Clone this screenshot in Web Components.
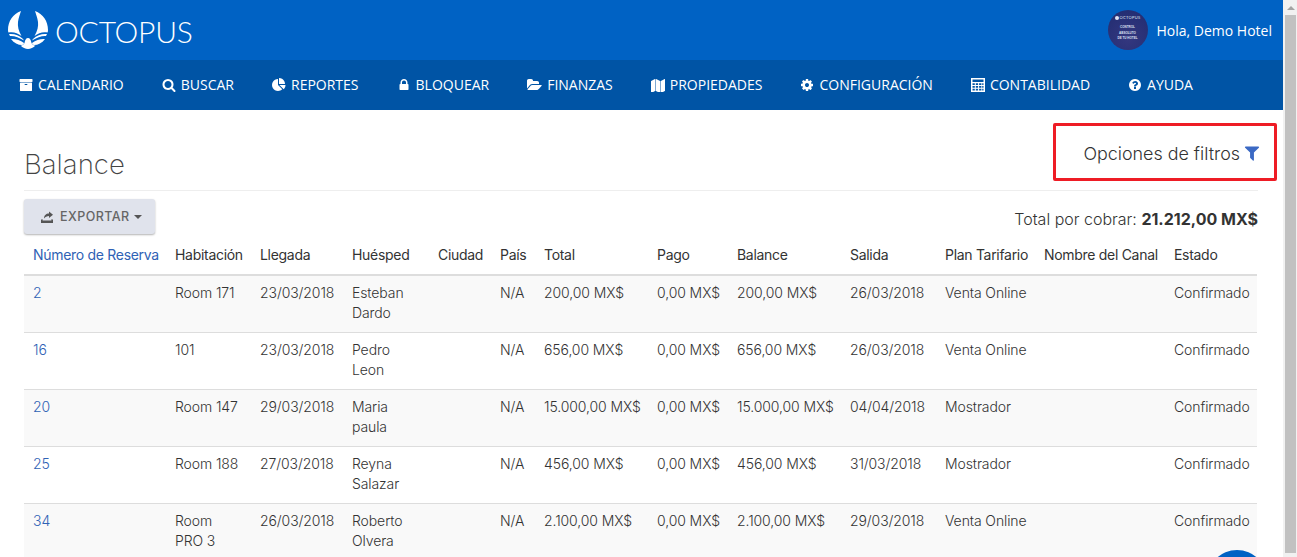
<!DOCTYPE html>
<html lang="es">
<head>
<meta charset="utf-8">
<title>Balance</title>
<style>
  html, body { margin: 0; height: 100%; overflow: hidden; background: #fff; }
  body { display: flex; font-family: "Open Sans", sans-serif; }
</style>
</head>
<body>
<app-shell>
  <app-header></app-header>
  <app-nav></app-nav>
  <balance-page></balance-page>
  <chat-bubble></chat-bubble>
</app-shell>
<page-scrollbar></page-scrollbar>

<script>
const ICONS = {
  archive: ['0 0 1792 1792', 'M1088 832q0-26-19-45t-45-19h-256q-26 0-45 19t-19 45 19 45 45 19h256q26 0 45-19t19-45zm576-192v960q0 26-19 45t-45 19h-1408q-26 0-45-19t-19-45v-960q0-26 19-45t45-19h1408q26 0 45 19t19 45zm64-448v256q0 26-19 45t-45 19h-1536q-26 0-45-19t-19-45v-256q0-26 19-45t45-19h1536q26 0 45 19t19 45z'],
  search: ['0 0 1792 1792', 'M1216 832q0-185-131.500-316.500t-316.500-131.500-316.500 131.500-131.500 316.500 131.500 316.500 316.500 131.500 316.500-131.500 131.500-316.500zm512 832q0 52-38 90t-90 38q-54 0-90-38l-343-342q-179 124-399 124-143 0-273.500-55.500t-225-150-150-225-55.500-273.500 55.500-273.500 150-225 225-150 273.500-55.500 273.500 55.500 225 150 150 225 55.500 273.500q0 220-124 399l343 343q37 37 37 90z'],
  pie: ['0 0 1792 1792', 'M768 890l546 546q-106 108-247.500 168t-298.500 60q-209 0-385.500-103t-279.500-279.500-103-385.500 103-385.500 279.500-279.500 385.500-103v762zm187 6h773q0 157-60 298.500t-168 247.500zm709-128h-768v-768q209 0 385.500 103t279.500 279.500 103 385.500z'],
  lock: ['0 0 1792 1792', 'M640 768h512v-192q0-106-75-181t-181-75-181 75-75 181v192zm832 96v576q0 40-28 68t-68 28h-960q-40 0-68-28t-28-68v-576q0-40 28-68t68-28h32v-192q0-184 132-316t316-132 316 132 132 316v192h32q40 0 68 28t28 68z'],
  folder: ['0 0 1920 1792', 'M1879 952q0 31-31 66l-336 396q-43 51-120.500 86.500t-143.500 35.500h-1088q-34 0-60.500-13t-26.500-43q0-31 31-66l336-396q43-51 120.500-86.500t143.500-35.500h1088q34 0 60.500 13t26.500 43zm-343-344v160h-832q-94 0-197 47.500t-164 119.500l-337 396-5 6q0-4-.5-12.500t-.5-12.500v-960q0-92 66-158t158-66h320q92 0 158 66t66 158v32h544q92 0 158 66t66 158z'],
  map: ['0 0 1792 1792', 'M512 128q13 0 22.500 9.500t9.500 22.500v1472q0 20-17 28l-480 256q-7 4-15 4-13 0-22.500-9.500t-9.500-22.500v-1472q0-20 17-28l480-256q7-4 15-4zm1248 0q13 0 22.500 9.500t9.500 22.500v1472q0 20-17 28l-480 256q-7 4-15 4-13 0-22.500-9.500t-9.500-22.500v-1472q0-20 17-28l480-256q7-4 15-4zm-1120 0q8 0 14 3l512 256q18 10 18 29v1472q0 13-9.500 22.500t-22.500 9.500q-8 0-14-3l-512-256q-18-10-18-29v-1472q0-13 9.500-22.500t22.500-9.500z'],
  cog: ['0 0 1792 1792', 'M1152 896q0-106-75-181t-181-75-181 75-75 181 75 181 181 75 181-75 75-181zm512-109v222q0 12-8 23t-20 13l-185 28q-19 54-39 91 35 50 107 138 10 12 10 25t-9 23q-27 37-99 108t-94 71q-12 0-26-9l-138-108q-44 23-91 38-16 136-29 186-7 28-36 28h-222q-14 0-24.500-8.500t-11.500-21.500l-28-184q-49-16-90-37l-141 107q-10 9-25 9-14 0-25-11-126-114-165-168-7-10-7-23 0-12 8-23 15-21 51-66.500t54-70.500q-27-50-41-99l-183-27q-13-2-21-12.500t-8-23.500v-222q0-12 8-23t19-13l186-28q14-46 39-92-40-57-107-138-10-12-10-24 0-10 9-23 26-36 98.500-107.500t94.500-71.500q13 0 26 10l138 107q44-23 91-38 16-136 29-186 7-28 36-28h222q14 0 24.500 8.500t11.500 21.500l28 184q49 16 90 37l142-107q9-9 24-9 13 0 25 10 129 119 165 170 7 8 7 22 0 12-8 23-15 21-51 66.500t-54 70.500q26 50 41 98l183 28q13 2 21 12.500t8 23.500z'],
  calc: ['0 0 14 14', 'M0 0h14v14H0zM1.500 1.500v2.500h11V1.500zM1.500 5.200v1.800h2.300V5.200zM4.800 5.200v1.800h2.300V5.200zM8.100 5.200v1.800h2.300V5.200zM11.200 5.200v1.800h1.300V5.200zM1.500 8v1.800h2.300V8zM4.800 8v1.800h2.300V8zM8.100 8v1.800h2.300V8zM11.200 8v1.800h1.300V8zM1.500 10.800v1.800h2.300v-1.800zM4.800 10.800v1.800h2.300v-1.800zM8.100 10.800v1.800h2.300v-1.800zM11.200 10.800v1.800h1.300v-1.800z'],
  help: ['0 0 1792 1792', 'M1024 1376v-192q0-14-9-23t-23-9h-192q-14 0-23 9t-9 23v192q0 14 9 23t23 9h192q14 0 23-9t9-23zm256-672q0-88-55.500-163t-138.500-116-170-41q-243 0-371 213-15 24 8 42l132 100q7 6 19 6 16 0 25-12 53-68 86-92 34-24 86-24 48 0 85.500 26t37.500 59q0 38-20 61t-68 45q-63 28-115.500 86.500t-52.500 125.500v36q0 14 9 23t23 9h192q14 0 23-9t9-23q0-19 21.500-49.500t54.500-49.500q32-18 49-28.500t46-35 44.500-48 28-60.500 12.500-81zm384 192q0 209-103 385.500t-279.500 279.500-385.500 103-385.500-103-279.500-279.500-103-385.500 103-385.500 279.500-279.500 385.500-103 385.500 103 279.500 279.500 103 385.500z'],
  filter: ['0 0 1792 1792', 'M1595 295q17 41-14 70l-493 493v742q0 42-39 59-13 5-25 5-27 0-45-19l-256-256q-19-19-19-45v-486l-493-493q-31-29-14-70 17-39 59-39h1280q42 0 59 39z']
}

const LOGO_HALF = `
  <path d="M13 0C5 3 0 10 0 19c0 1 .2 2 .5 2.500 4-1 9 0 13 3.500C10.500 20 9.500 15 10 11 10.500 7 12 3 13 0z"/>
  <path d="M1 23c5-.5 10 1 14 5l1 1.500c-5-3-10-5-14-4.500z"/>
  <path d="M3 28c4-.5 9 1 13 4 0 1-1 2-2 2-4 0-8-2-11-6z"/>
`

function icon(name, size) {
  const [box, d] = ICONS[name]
  return `<svg viewBox="${box}" height="${size}" fill="currentColor" fill-rule="evenodd" aria-hidden="true"><path d="${d}"/></svg>`
}

class AppShell extends HTMLElement {
  constructor() {
    super()
    this.attachShadow({ mode: 'open' }).innerHTML = `
      <style>
        :host { display: flex; flex-direction: column; flex: 1; min-width: 0; height: 100vh; overflow: hidden; position: relative; }
      </style>
      <slot></slot>
    `
  }
}

class AppHeader extends HTMLElement {
  constructor() {
    super()
    this.attachShadow({ mode: 'open' }).innerHTML = `
      <style>
        :host { display: flex; flex: none; align-items: center; justify-content: space-between; height: 60px; padding: 0 11px 0 8px; background: #0062c4; color: #fff; }
        .logo { display: flex; align-items: center; gap: 7px; }
        .word { font: 300 30px/1 "Lato", sans-serif; letter-spacing: -0.2px; padding-top: 1px; }
        .user { display: flex; align-items: center; gap: 9px; font: 14px "Open Sans", sans-serif; }
        .avatar {
          width: 40px; height: 40px; border-radius: 50%; background: radial-gradient(circle at 50% 70%, #34377f, #202c70);
          display: flex; flex-direction: column; align-items: center; overflow: hidden; color: #dfe3f3;
          font: 700 3px/5.500px "Liberation Sans", sans-serif; text-align: center;
        }
        .avatar .brand { font: 400 4px/5px "Lato", sans-serif; margin: 5px 0 5px; letter-spacing: 0.3px; }
        .avatar .brand::before { content: ""; display: inline-block; width: 4px; height: 4px; margin-right: 1px; border-radius: 50%; background: #dfe3f3; vertical-align: -0.5px; }
      </style>
      <div class="logo">
        <svg width="40" height="38" viewBox="0 0 40 38" fill="#fff" aria-hidden="true">
          <g>${LOGO_HALF}</g>
          <g transform="translate(40 0) scale(-1 1)">${LOGO_HALF}</g>
          <path d="M20 27c2 0 3 2 3.500 5 1 2 2.500 2.500 4 2.500-2 2-5 3.500-7.500 3.500s-5.500-1.500-7.500-3.500c1.500 0 3-.5 4-2.500.5-3 1.500-5 3.500-5z"/>
        </svg>
        <span class="word">OCTOPUS</span>
      </div>
      <div class="user">
        <div class="avatar"><span class="brand">OCTOPUS</span><span>CONTROL</span><span>ABSOLUTO</span><span>DE TU HOTEL</span></div>
        <span>Hola, Demo Hotel</span>
      </div>
    `
  }
}

class NavItem extends HTMLElement {
  connectedCallback() {
    if (this.shadowRoot) return
    this.attachShadow({ mode: 'open' }).innerHTML = `
      <style>
        :host { display: flex; align-items: center; gap: 5px; white-space: nowrap; }
        svg { display: block; }
      </style>
      ${icon(this.dataset.icon, this.dataset.size || 14)}
      <slot></slot>
    `
  }
}

class AppNav extends HTMLElement {
  constructor() {
    super()
    this.attachShadow({ mode: 'open' }).innerHTML = `
      <style>
        :host { display: flex; flex: none; align-items: center; gap: 38px; height: 49px; padding: 0 19px 1px; background: #0054a5; color: #fff; font: 14px "Open Sans", sans-serif; }
      </style>
      <slot></slot>
    `
    this.innerHTML = [
      ['archive', 'CALENDARIO'], ['search', 'BUSCAR'], ['pie', 'REPORTES'], ['lock', 'BLOQUEAR'],
      ['folder', 'FINANZAS'], ['map', 'PROPIEDADES'], ['cog', 'CONFIGURACIÓN'], ['calc', 'CONTABILIDAD'], ['help', 'AYUDA']
    ].map(([i, t]) => `<nav-item data-icon="${i}">${t}</nav-item>`).join('')
  }
}

class BalancePage extends HTMLElement {
  constructor() {
    super()
    this.attachShadow({ mode: 'open' }).innerHTML = `
      <style>
        :host { display: block; flex: 1; padding: 0 25px 0 24px; color: #333; font: 300 14px/20px "Inter", sans-serif; }
        .head { display: flex; justify-content: space-between; align-items: flex-end; height: 80px; border-bottom: 1px solid #eee; }
        h1 { margin: 0 0 8px 0; font: 200 27.600px/36px "Inter", sans-serif; color: #444; }
        .filters { display: flex; align-items: center; gap: 3px; width: 224px; height: 58px; box-sizing: border-box; margin: 0 -19px 9px 0; padding: 2px 13px 0 0; justify-content: flex-end; border: 3px solid #ee1c25; border-radius: 2px; font: 300 17.900px "Inter", sans-serif; color: #333; }
        .filters svg { color: #3b69c4; }
        .tools { display: flex; justify-content: space-between; align-items: flex-end; margin-top: 8px; }
        button { display: flex; align-items: center; gap: 6px; width: 131px; height: 35px; padding: 0 0 0 16px; border: 0; border-radius: 3px; background: #e0e3ec; box-shadow: 0 1px 2px rgba(0, 0, 0, .3); color: #666; font: 500 12.500px "Inter", sans-serif; letter-spacing: .45px; }
        .caret { width: 0; height: 0; border: 4px solid transparent; border-top-color: #555; border-bottom: 0; margin-left: -2px; }
        .total { font-size: 16px; line-height: 20px; margin-bottom: 5px; }
        .total b { font-weight: 700; }
      </style>
      <div class="head">
        <h1>Balance</h1>
        <div class="filters">Opciones de filtros ${icon('filter', 18)}</div>
      </div>
      <div class="tools">
        <button type="button">
          <svg width="14" height="14" viewBox="0 0 14 14" fill="#555" aria-hidden="true"><path d="M1 9.500h2l-.5 1h9l-.5-1h2V13H1zM4 8.500c0-3 2-5 5-5V1.500l4 3.300L9 8V6C7 6 5 7 4 8.500z"/></svg>
          EXPORTAR <span class="caret"></span>
        </button>
        <div class="total">Total por cobrar: <b>21.212,00 MX$</b></div>
      </div>
      <balance-table></balance-table>
    `
  }
}

const COLUMNS = [
  ['Número de Reserva', 142], ['Habitación', 85], ['Llegada', 92], ['Huésped', 86], ['Ciudad', 62], ['País', 44], ['Total', 113],
  ['Pago', 80], ['Balance', 113], ['Salida', 95], ['Plan Tarifario', 99], ['Nombre del Canal', 130], ['Estado', 92]
]

const ROWS = [
  ['2', 'Room 171', '23/03/2018', 'Esteban Dardo', '', 'N/A', '200,00 MX$', '0,00 MX$', '200,00 MX$', '26/03/2018', 'Venta Online', '', 'Confirmado'],
  ['16', '101', '23/03/2018', 'Pedro Leon', '', 'N/A', '656,00 MX$', '0,00 MX$', '656,00 MX$', '26/03/2018', 'Venta Online', '', 'Confirmado'],
  ['20', 'Room 147', '29/03/2018', 'Maria paula', '', 'N/A', '15.000,00 MX$', '0,00 MX$', '15.000,00 MX$', '04/04/2018', 'Mostrador', '', 'Confirmado'],
  ['25', 'Room 188', '27/03/2018', 'Reyna Salazar', '', 'N/A', '456,00 MX$', '0,00 MX$', '456,00 MX$', '31/03/2018', 'Mostrador', '', 'Confirmado'],
  ['34', 'Room PRO&nbsp;3', '26/03/2018', 'Roberto Olvera', '', 'N/A', '2.100,00 MX$', '0,00 MX$', '2.100,00 MX$', '29/03/2018', 'Venta Online', '', 'Confirmado']
]

class BalanceTable extends HTMLElement {
  constructor() {
    super()
    this.attachShadow({ mode: 'open' }).innerHTML = `
      <style>
        :host { display: block; }
        table { border-collapse: collapse; table-layout: fixed; width: 1233px; }
        th, td { text-align: left; vertical-align: top; line-height: 20px; }
        th { padding: 11px 0 9px 9px; font-weight: 400; color: #333; border-bottom: 2px solid #ddd; white-space: nowrap; letter-spacing: -.3px; }
        th.link, td.link { color: #2f62b5; }
        td { padding: 7px 0 9px 9px; border-top: 1px solid #ddd; letter-spacing: -.1px; white-space: nowrap; }
        td.wrap { white-space: normal; padding-right: 12px; }
        tr:first-child td { border-top: 0; }
        tbody tr:nth-child(odd) { background: #f9f9f9; }
      </style>
      <table>
        <colgroup>${COLUMNS.map(c => `<col style="width:${c[1]}px">`).join('')}</colgroup>
        <thead><tr>${COLUMNS.map((c, i) => `<th class="${i ? '' : 'link'}">${c[0]}</th>`).join('')}</tr></thead>
        <tbody>${ROWS.map(r => `<tr>${r.map((v, i) => `<td class="${i ? (i === 1 || i === 3 ? 'wrap' : '') : 'link'}">${v}</td>`).join('')}</tr>`).join('')}</tbody>
      </table>
    `
  }
}

class ChatBubble extends HTMLElement {
  constructor() {
    super()
    this.attachShadow({ mode: 'open' }).innerHTML = `
      <style>
        :host { position: absolute; left: 1207px; top: 550px; width: 60px; height: 60px; border-radius: 50%; background: #0062c4; }
      </style>
    `
  }
}

class PageScrollbar extends HTMLElement {
  constructor() {
    super()
    this.attachShadow({ mode: 'open' }).innerHTML = `
      <style>
        :host { display: flex; flex-direction: column; flex: none; width: 14px; height: 100vh; background: #f1f1f1; }
        .arrow { flex: none; height: 15px; display: flex; align-items: center; justify-content: center; padding-left: 1px; }
        .arrow i { width: 0; height: 0; border: 4px solid transparent; border-bottom: 4px solid #a3a3a3; border-top: 0; }
        .thumb { flex: none; height: 538px; margin: 0 1px 0 2px; background: #c1c1c1; }
      </style>
      <div class="arrow"><i></i></div>
      <div class="thumb"></div>
    `
  }
}

customElements.define('app-shell', AppShell)
customElements.define('app-header', AppHeader)
customElements.define('nav-item', NavItem)
customElements.define('app-nav', AppNav)
customElements.define('balance-table', BalanceTable)
customElements.define('balance-page', BalancePage)
customElements.define('chat-bubble', ChatBubble)
customElements.define('page-scrollbar', PageScrollbar)
</script>
</body>
</html>
